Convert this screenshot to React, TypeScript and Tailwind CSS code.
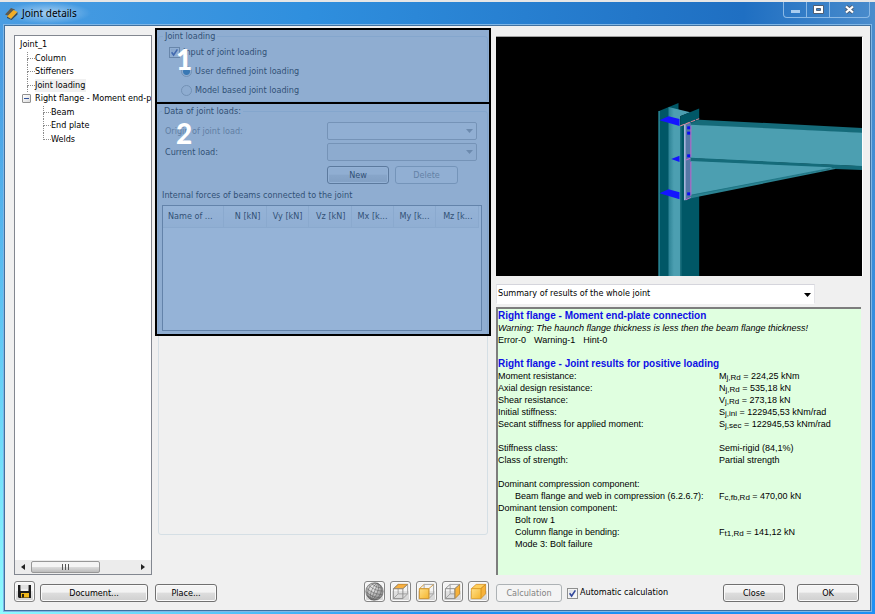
import React from "react";
import type { ReactNode } from "react";

const uiFont = "font-['DejaVu_Sans_Condensed','DejaVu_Sans',sans-serif]";

function Branch({ last = false }: { last?: boolean }) {
  return (
    <span className="flex h-full w-2 shrink-0 flex-col">
      <span className="flex-1 border-b border-l border-dotted border-[#8c8c8c]" />
      <span className={last ? "flex-1" : "flex-1 border-l border-dotted border-[#8c8c8c]"} />
    </span>
  );
}

function TreePanel() {
  return (
    <div className="mt-[9px] flex w-[138px] shrink-0 flex-col overflow-hidden border border-[#828790] bg-white">
      <ul className="mt-[2px] grid h-[108px] grid-rows-8 whitespace-nowrap pl-1 leading-[13px]">
        <li className="flex items-center pl-px">Joint_1</li>
        {["Column", "Stiffeners", "Joint loading"].map((label) => (
          <li key={label} className="flex items-center pl-2">
            <Branch />
            <span className={label === "Joint loading" ? "bg-[#f0f0f0] pr-px" : ""}>{label}</span>
          </li>
        ))}
        <li className="flex items-center pl-[3px]">
          <button
            type="button"
            aria-label="Collapse Right flange"
            className="mr-[4px] flex size-[9px] shrink-0 items-center justify-center rounded-[1px] border border-[#919191] bg-linear-to-br from-white to-[#dcdcdc]"
          >
            <span className="h-px w-[5px] bg-[#34549c]" />
          </button>
          <span>Right flange - Moment end-plate</span>
        </li>
        {["Beam", "End plate", "Welds"].map((label) => (
          <li key={label} className="flex items-center pl-6">
            <Branch last={label === "Welds"} />
            <span>{label}</span>
          </li>
        ))}
      </ul>
      <div className="mt-auto flex h-[14px] items-center bg-[#ececec]">
        <button type="button" aria-label="Scroll left" className="flex w-4 justify-center">
          <svg width="4" height="6" viewBox="0 0 4 6"><path d="M4 0v6L0 3z" fill="#222" /></svg>
        </button>
        <div className="flex h-[12px] w-[69px] items-center justify-center gap-px rounded-[2px] border border-[#979797] bg-linear-to-b from-[#f4f4f4] from-45% via-[#dcdcdc] via-50% to-[#bcbcbc]">
          <span className="h-[6px] w-px bg-[#555]" />
          <span className="ml-px h-[6px] w-px bg-[#555]" />
          <span className="ml-px h-[6px] w-px bg-[#555]" />
        </div>
        <button type="button" aria-label="Scroll right" className="ml-auto flex w-4 justify-center">
          <svg width="4" height="6" viewBox="0 0 4 6"><path d="M0 0v6l4-3z" fill="#222" /></svg>
        </button>
      </div>
    </div>
  );
}

function PushButton({ children, width, disabled = false }: { children: ReactNode; width: string; disabled?: boolean }) {
  return (
    <button
      type="button"
      disabled={disabled}
      className={
        "h-[18px] shrink-0 rounded-[3px] border leading-[16px] " +
        (disabled
          ? "border-[#adb2b5] bg-[#f4f4f4] text-[#838383] "
          : "border-[#707070] bg-linear-to-b from-[#f3f3f3] from-45% via-[#dddddd] via-50% to-[#cfcfcf] text-black shadow-[inset_0_0_0_1px_#fafafa] ") +
        width
      }
    >
      {children}
    </button>
  );
}

function Tick() {
  return (
    <svg viewBox="0 0 11 11" className="pointer-events-none absolute inset-0 m-auto size-[9px]">
      <path d="M2 5.2 4.4 8.6 9 1.6" fill="none" stroke="#31479b" strokeWidth="1.9" />
    </svg>
  );
}

function TickBox({ id }: { id: string }) {
  return (
    <span className="relative size-[11px] shrink-0">
      <input
        id={id}
        type="checkbox"
        defaultChecked
        className="block size-[11px] appearance-none border border-[#8e8f8f] bg-linear-to-br from-[#d5d9de] to-white shadow-[inset_0_0_0_1px_#f4f4f4]"
      />
      <Tick />
    </span>
  );
}

function LoadSelect({ id, muted = false }: { id: string; muted?: boolean }) {
  return (
    <span className="relative block w-[150px]">
      <select
        id={id}
        disabled
        className={"block h-[18px] w-full appearance-none rounded-[2px] border border-[#b0b0b0] " + (muted ? "bg-[#ececec]" : "bg-[#f4f4f4]")}
      />
      <svg width="7" height="4" viewBox="0 0 7 4" className="pointer-events-none absolute top-[7px] right-[4px]">
        <path d="M0 0h7L3.500 4z" fill="#9a9a9a" />
      </svg>
    </span>
  );
}

const forceColumns: [string, string][] = [
  ["Name of ...", "w-[60px] text-left"],
  ["N [kN]", "w-[43px] text-right"],
  ["Vy [kN]", "w-[42px] text-right"],
  ["Vz [kN]", "w-[43px] text-right"],
  ["Mx [k...", "w-[42px] text-right"],
  ["My [k...", "w-[42px] text-right"],
  ["Mz [k...", "w-[43px] text-right"],
];

function LoadingPanel() {
  return (
    <div className="relative mt-[2px] mb-[40px] flex w-[336px] shrink-0 flex-col px-[3px] pt-[2px]">
      <fieldset className="h-[72px] min-w-0 rounded-[3px] border border-[#d5dfe5] px-[10px]">
        <legend className="-ml-[6px] px-[2px] leading-[12px]">Joint loading</legend>
        <div className="mt-[3px] flex items-center gap-[3px] leading-[14px]">
          <TickBox id="input-loading" />
          <label htmlFor="input-loading">Input of joint loading</label>
        </div>
        {["User defined joint loading", "Model based joint loading"].map((label, i) => (
          <label key={label} className="mt-[5px] ml-[12px] flex items-center gap-[3px] leading-[14px]">
            <input
              type="radio"
              name="loading-source"
              defaultChecked={i === 0}
              className="size-[11px] appearance-none rounded-full border border-[#a8a9a9] bg-[#eeeeee] checked:bg-[radial-gradient(circle,#1a6da8_0_3px,#eeeeee_4px)]"
            />
            {label}
          </label>
        ))}
      </fieldset>
      <fieldset className="mt-[3px] min-w-0 flex-1 rounded-[3px] border border-[#d5dfe5] pr-[5px] pl-[3px]">
        <legend className="px-[2px] leading-[12px]">Data of joint loads:</legend>
        <div className="mt-[5px] mr-[5px] ml-[3px] grid grid-cols-[1fr_150px] items-center gap-y-[3px] leading-[14px]">
          <label htmlFor="load-origin" className="text-[#7c7c7c]">Origin of joint load:</label>
          <LoadSelect id="load-origin" />
          <label htmlFor="load-current">Current load:</label>
          <LoadSelect id="load-current" muted />
          <div className="col-start-2 mt-[2px] flex gap-[6px]">
            <PushButton width="w-[62px]">New</PushButton>
            <PushButton width="w-[63px]" disabled>Delete</PushButton>
          </div>
        </div>
        <p className="mt-[4px] leading-[14px]">Internal forces of beams connected to the joint</p>
        <div className="mt-[3px] h-[126px] overflow-hidden border border-[#828790] bg-white">
          <table className="w-[315px] table-fixed border-collapse">
            <thead>
              <tr className="h-[21px] bg-linear-to-b from-white to-[#f2f3f5]">
                {forceColumns.map(([label, look]) => (
                  <th key={label} scope="col" className={"border-r border-b border-[#e4e5e8] px-[5px] font-normal whitespace-nowrap " + look}>
                    {label}
                  </th>
                ))}
              </tr>
            </thead>
          </table>
        </div>
      </fieldset>
      <div className="pointer-events-none absolute inset-x-0 top-0 font-['Lato',sans-serif] text-[28px] leading-[32px] font-black text-white">
        <div className="h-[76px] border-2 border-black bg-[#4f81bd]/60 pt-[13px] pl-[19px]">1</div>
        <div className="-mt-[2px] h-[234px] border-2 border-black bg-[#4f81bd]/60 pt-[13px] pl-[19px]">2</div>
      </div>
    </div>
  );
}

function JointView() {
  return (
    <svg
      viewBox="18 20 1097 717"
      preserveAspectRatio="xMaxYMid slice"
      className="block h-[239px] w-full bg-black"
      role="img"
      aria-label="3D view of the joint"
    >
      <defs>
        <linearGradient id="web" x1="0" x2="1">
          <stop offset="0" stopColor="#2c8294" />
          <stop offset="0.25" stopColor="#4c9fb1" />
        </linearGradient>
      </defs>
      <path d="M505 243 565 218V240L537 234V737H505z" fill="#005766" />
      <path d="M507 242V737" stroke="#2f8796" strokeWidth="4" />
      <path d="M535 230 600 246 570 258V737H535z" fill="url(#web)" />
      <path d="M570 258 627 235V737H570z" fill="#005766" />
      <path d="M572 288V737" stroke="#2b8291" strokeWidth="3" />
      <path d="M508 270 535 258 568 266V287zM543 386 568 376V395zM508 489 535 477 568 486V507z" fill="#1414ff" />
      <path d="M590 284 627 268 1115 293V309L600 285z" fill="#156b7a" />
      <path d="M600 283 1115 307V408L600 384z" fill="#4c9fb1" />
      <path d="M600 390 1115 412 1020 416 600 499z" fill="#4c9fb1" />
      <path d="M590 389 602 382 1115 407V419L1035 416 1020 411 600 392z" fill="#156b7a" />
      <path d="M1035 412 605 493 583 508 620 500 1035 416z" fill="#2b8291" />
      <path d="M1020 414 600 495" stroke="#156b7a" strokeWidth="2" />
      <path d="M582 282 602 276V498L582 510z" fill="#5577a5" />
      <path d="M602 286V380M602 394V496M587 508 602 501M588 389 600 384" stroke="#c264cf" strokeWidth="3" />
      <path d="M584 282V510" stroke="#b9c3e8" strokeWidth="4" />
      <path d="M570 287 627 265" stroke="#df8799" strokeWidth="3" strokeDasharray="14 3" />
      <g fill="#0c0cf4">
        <rect x="591" y="288" width="9" height="9" />
        <rect x="591" y="304" width="9" height="9" />
        <rect x="591" y="372" width="9" height="9" />
        <rect x="591" y="486" width="9" height="9" />
      </g>
    </svg>
  );
}

type ResultRow = { label?: string; symbol?: string; sub?: string; value?: string; indent?: boolean };

const resultRows: ResultRow[] = [
  { label: "Moment resistance:", symbol: "M", sub: "j,Rd", value: " = 224,25 kNm" },
  { label: "Axial design resistance:", symbol: "N", sub: "j,Rd", value: " = 535,18 kN" },
  { label: "Shear resistance:", symbol: "V", sub: "j,Rd", value: " = 273,18 kN" },
  { label: "Initial stiffness:", symbol: "S", sub: "j,ini", value: " = 122945,53 kNm/rad" },
  { label: "Secant stiffness for applied moment:", symbol: "S", sub: "j,sec", value: " = 122945,53 kNm/rad" },
  {},
  { label: "Stiffness class:", value: "Semi-rigid (84,1%)" },
  { label: "Class of strength:", value: "Partial strength" },
  {},
  { label: "Dominant compression component:" },
  { label: "Beam flange and web in compression (6.2.6.7):", symbol: "F", sub: "c,fb,Rd", value: " = 470,00 kN", indent: true },
  { label: "Dominant tension component:" },
  { label: "Bolt row 1", indent: true },
  { label: "Column flange in bending:", symbol: "F", sub: "t1,Rd", value: " = 141,12 kN", indent: true },
  { label: "Mode 3: Bolt failure", indent: true },
];

function ResultsPanel() {
  return (
    <div className="ml-[5px] flex min-w-0 flex-1 flex-col pt-[10px] pr-[7px]">
      <div className="border-t border-r border-t-[#a0a0a0] border-r-white">
        <JointView />
      </div>
      <div className="relative mt-[8px] mr-[48px]">
        <select
          aria-label="Results"
          className="block h-[20px] w-full appearance-none border border-t-[#d5d5dc] border-r-[#e4e4e8] border-b-white border-l-[#e4e4e8] bg-white pb-[2px] pl-px leading-[16px]"
        >
          <option>Summary of results of the whole joint</option>
        </select>
        <svg width="7" height="4" viewBox="0 0 7 4" className="pointer-events-none absolute top-[9px] right-[4px]">
          <path d="M0 0h7L3.500 4z" fill="#000" />
        </svg>
      </div>
      <div className="mt-[3px] mr-[2px] flex-1 border-t-2 border-l-2 border-[#7d7d7d] bg-[#e0ffe0] pt-px font-['Liberation_Sans',Arial,sans-serif] text-[9px] leading-[12px] whitespace-nowrap">
        <h2 className="text-[10px] font-bold text-[#0f0fe6]">Right flange - Moment end-plate connection</h2>
        <p className="italic">Warning: The haunch flange thickness is less then the beam flange thickness!</p>
        <p className="mb-[12px] flex gap-[8px]">
          <span>Error-0</span>
          <span>Warning-1</span>
          <span>Hint-0</span>
        </p>
        <h2 className="text-[10px] font-bold text-[#0f0fe6]">Right flange - Joint results for positive loading</h2>
        <table className="w-full table-fixed border-collapse">
          <tbody>
            {resultRows.map((row, i) => (
              <tr key={i} className="h-[12px]">
                <td className={row.indent ? "w-[221px] pl-[17px]" : "w-[221px]"}>{row.label}</td>
                <td>
                  {row.symbol}
                  {row.sub && <sub className="bottom-[-1px] text-[8px] leading-none">{row.sub}</sub>}
                  {row.value}
                </td>
              </tr>
            ))}
          </tbody>
        </table>
      </div>
    </div>
  );
}

function IconButton({ label, children }: { label: string; children: ReactNode }) {
  return (
    <button
      type="button"
      aria-label={label}
      className="flex h-[21px] w-[21px] shrink-0 items-center justify-center rounded-[3px] border border-[#858585] bg-linear-to-b from-[#f4f4f4] from-45% via-[#e2e2e2] via-50% to-[#d4d4d4] shadow-[inset_0_0_0_1px_#fafafa]"
    >
      {children}
    </button>
  );
}

function SaveIcon() {
  return (
    <svg width="13" height="13" viewBox="0 0 13 13">
      <path d="M0 0h13v13H1l-1-1z" fill="#1c1c1c" />
      <path d="M2.500 0h8v6h-8z" fill="#f1f1f1" />
      <path d="M2.500 1h8M2.500 3h8" stroke="#c4c4c4" strokeWidth=".7" />
      <path d="M3 8h8v4.500H3z" fill="#f0b81a" />
      <path d="M4 9h2v3.500H4z" fill="#2a2210" />
    </svg>
  );
}

function SphereIcon() {
  return (
    <svg width="19" height="19" viewBox="0 0 19 19">
      <defs>
        <radialGradient id="ball" cx=".4" cy=".3" r=".7">
          <stop offset="0" stopColor="#f4f4f4" />
          <stop offset="1" stopColor="#8a8a8a" />
        </radialGradient>
      </defs>
      <circle cx="9.500" cy="9.500" r="8.700" fill="url(#ball)" stroke="#666" strokeWidth=".7" />
      <g fill="none" stroke="#5c5c5c" strokeWidth=".5" transform="rotate(22 9.500 9.500)">
        <ellipse cx="9.500" cy="9.500" rx="3" ry="8.700" />
        <ellipse cx="9.500" cy="9.500" rx="6.500" ry="8.700" />
        <path d="M9.500 1v17M1 9.500q8.500 3 17 0M2 6q7.500 3 15 0M4 3.500q5.500 2 11 0M2 13q7.500 3 15 0M4 16q5.500 2 11 0" />
      </g>
    </svg>
  );
}

function CubeIcon({ face }: { face: "top" | "front" | "side" | "solid" }) {
  return (
    <svg width="17" height="17" viewBox="0 0 18 18" strokeLinejoin="round">
      <defs>
        <linearGradient id={"gold-" + face} x1="0" y1="0" x2="1" y2="1">
          <stop offset="0" stopColor="#ffe08a" />
          <stop offset="1" stopColor="#f5b52c" />
        </linearGradient>
      </defs>
      {face !== "solid" && (
        <path d="M6.500 1.500h10v10h-10zM1.500 16.500l5-5M11.500 16.500l5-5" fill="none" stroke="#a0a0a0" strokeWidth="1" />
      )}
      {(face === "top" || face === "solid") && (
        <path d="M1.500 6 6.500 1.500h10L11.500 6z" fill={face === "solid" ? "#ffcf5c" : "#f8b040"} stroke="#d68a17" strokeWidth=".8" />
      )}
      {(face === "side" || face === "solid") && (
        <path d="M11.500 6l5-4.500v10l-5 5z" fill="#f7b23a" stroke="#c98618" strokeWidth=".8" />
      )}
      {(face === "front" || face === "solid") && (
        <path d="M1.500 6h10v10.500h-10z" fill={"url(#gold-" + face + ")"} stroke="#dc9a1b" strokeWidth=".8" />
      )}
      {face !== "solid" && (
        <path
          d="M1.500 6h10v10.500h-10zM1.500 6l5-4.500M11.500 6l5-4.500"
          fill="none"
          stroke={face === "front" ? "#d09a3a" : "#8c8c8c"}
          strokeWidth="1"
        />
      )}
    </svg>
  );
}

function Footer() {
  return (
    <footer className="flex h-[35px] shrink-0 items-start pr-[11px]">
      <div className="flex w-[482px] shrink-0 items-end pt-[6px] pr-[7px]">
        <IconButton label="Save"><SaveIcon /></IconButton>
        <span className="ml-[5px] flex gap-[7px]">
          <PushButton width="w-[108px]">Document...</PushButton>
          <PushButton width="w-[62px]">Place...</PushButton>
        </span>
        <span className="ml-auto flex gap-[5px]">
          <IconButton label="Rotate view"><SphereIcon /></IconButton>
          <IconButton label="Top view"><CubeIcon face="top" /></IconButton>
          <IconButton label="Front view"><CubeIcon face="front" /></IconButton>
          <IconButton label="Side view"><CubeIcon face="side" /></IconButton>
          <IconButton label="Axonometric view"><CubeIcon face="solid" /></IconButton>
        </span>
      </div>
      <div className="flex flex-1 items-center pt-[9px]">
        <PushButton width="w-[66px]" disabled>Calculation</PushButton>
        <span className="ml-[5px] flex items-center gap-[2px]">
          <TickBox id="auto-calc" />
          <label htmlFor="auto-calc">Automatic calculation</label>
        </span>
        <span className="ml-auto flex gap-[12px]">
          <PushButton width="w-[62px]">Close</PushButton>
          <PushButton width="w-[62px]">OK</PushButton>
        </span>
      </div>
    </footer>
  );
}

function TitleBar() {
  return (
    <header className="flex h-[23px] shrink-0 items-start pl-[5px]">
      <div className="flex h-[22px] items-center gap-[4px] bg-[radial-gradient(closest-side,rgba(255,255,255,0.5),transparent)] pr-[14px]">
        <svg width="13" height="13" viewBox="0 0 13 13">
          <path d="M0 7.500 6 1l4 1.500L4 9z" fill="#5c5a50" />
          <path d="M2 9.500 8.500 3l4 2L6 12z" fill="#f1ad27" />
          <path d="M2 9.500 6 12l6.500-7v2.500L6.500 13 2 11z" fill="#3d4a52" />
        </svg>
        <h1 className="font-['Noto_Sans','Open_Sans',sans-serif] text-[10px] leading-[20px]">Joint details</h1>
      </div>
      <div className="mr-[5px] ml-auto flex h-[16px] overflow-hidden rounded-b-[4px] border border-t-0 border-[#8ab9e6]">
        <button type="button" aria-label="Minimize" className="flex w-[23px] items-center justify-center border-r border-[#8ab9e6]">
          <span className="mt-[3px] h-[3px] w-[9px] bg-[#a9cdf0]" />
        </button>
        <button type="button" aria-label="Maximize" className="flex w-[23px] items-center justify-center border-r border-[#8ab9e6]">
          <svg width="11" height="9" viewBox="0 0 11 9">
            <path d="M.5.500h10v8H.5z" fill="#fff" stroke="#4f5f75" />
            <path d="M3.500 3.500h4v2h-4z" fill="#3b83c8" stroke="#4f5f75" />
          </svg>
        </button>
        <button type="button" aria-label="Close window" className="flex w-[39px] items-center justify-center">
          <svg width="11" height="9" viewBox="0 0 11 9">
            <path d="M2 1.500 9 7.500M9 1.500 2 7.500" stroke="#4f5f75" strokeWidth="4" />
            <path d="M2 1.500 9 7.500M9 1.500 2 7.500" stroke="#fff" strokeWidth="2.200" />
          </svg>
        </button>
      </div>
    </header>
  );
}

export default function App() {
  return (
    <div
      className={
        "flex min-h-screen flex-col border-t-2 border-[#e6e6e6] bg-[radial-gradient(ellipse_50%_90%_at_0%_100%,#8ffcff,transparent),linear-gradient(to_bottom,transparent_10%,#1e90f5),linear-gradient(to_right,#4a9de2,#2f8fde_35%,#1f6fc2_85%,#4a8ccc)] text-[9px] text-black " +
        uiFont
      }
    >
      <TitleBar />
      <main className="mx-[4px] mb-[3px] flex flex-1 flex-col border border-[#41719f] bg-[#f0f0f0] pl-[9px] shadow-[0_0_0_1px_#7fb6e6]">
        <div className="flex flex-1">
          <TreePanel />
          <div className="w-[3px] shrink-0" />
          <LoadingPanel />
          <ResultsPanel />
        </div>
        <Footer />
      </main>
    </div>
  );
}
